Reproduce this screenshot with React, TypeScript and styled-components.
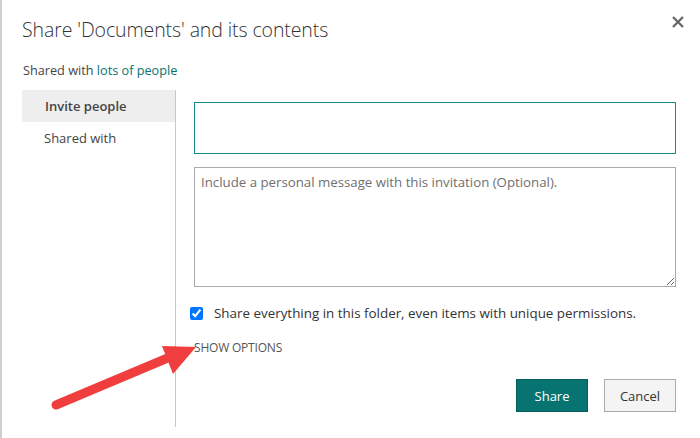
import React from 'react';
import styled, { createGlobalStyle } from 'styled-components';

const GlobalStyle = createGlobalStyle`
  html, body {
    margin: 0;
    padding: 0;
    background: #ffffff;
  }
  body {
    font-family: 'Open Sans', 'Noto Sans', 'Liberation Sans', sans-serif;
    color: #333333;
  }
`;

const teal = '#077471';

const Dialog = styled.div`
  position: relative;
  box-sizing: border-box;
  height: 438px;
  border-left: 2px solid #cfcfcf;
  padding: 0 24px 0 20px;
  display: flex;
  flex-direction: column;
`;

const Title = styled.h1`
  margin: 15px 0 0 0;
  font-size: 19.5px;
  line-height: 30px;
  font-weight: 300;
  color: #333333;
  letter-spacing: -0.1px;
`;

const CloseButton = styled.button`
  position: absolute;
  top: 14px;
  right: 14px;
  width: 16px;
  height: 16px;
  padding: 0;
  border: none;
  background: none;
  display: flex;
  align-items: center;
  justify-content: center;
  cursor: pointer;
`;

const Subtitle = styled.div`
  margin-top: 16px;
  padding-left: 1px;
  font-size: 12.7px;
  line-height: 18px;
  color: #444444;
`;

const PeopleLink = styled.a`
  color: ${teal};
  text-decoration: none;
`;

const Body = styled.div`
  margin-top: 11px;
  display: flex;
  flex: 1;
  padding-bottom: 11px;
`;

const Nav = styled.nav`
  width: 153px;
  flex-shrink: 0;
  border-right: 1px solid #c8c8c8;
  display: flex;
  flex-direction: column;
`;

const NavItem = styled.div<{ $active?: boolean }>`
  height: 32px;
  display: flex;
  align-items: center;
  padding-left: ${(p) => (p.$active ? '23px' : '22px')};
  font-size: 13px;
  font-weight: ${(p) => (p.$active ? 600 : 400)};
  color: #444444;
  background: ${(p) => (p.$active ? '#eeeeee' : 'transparent')};
`;

const Content = styled.div`
  flex: 1;
  padding: 12px 0 0 18px;
  display: flex;
  flex-direction: column;
`;

const PeopleInput = styled.input`
  box-sizing: border-box;
  width: 100%;
  height: 52px;
  border: 1px solid #138c87;
  outline: none;
  margin: 0;
  font-family: inherit;
  font-size: 13px;
`;

const Message = styled.textarea`
  box-sizing: border-box;
  width: 100%;
  height: 120px;
  margin: 13px 0 0 0;
  padding: 5px 6px;
  border: 1px solid #ababab;
  font-family: inherit;
  font-size: 13.25px;
  line-height: 18px;
  color: #333333;
  resize: both;
  &::placeholder {
    color: #6f6f6f;
  }
`;

const CheckRow = styled.label`
  display: flex;
  align-items: center;
  margin-top: 17px;
  margin-left: -4px;
  font-size: 13.4px;
  color: #333333;
`;

const Check = styled.input`
  width: 13px;
  height: 13px;
  margin: 0 11px 0 0;
`;

const ShowOptions = styled.div`
  margin-top: 18px;
  font-size: 12px;
  line-height: 16px;
  color: #555555;
  letter-spacing: -0.2px;
`;

const Actions = styled.div`
  margin-top: 23px;
  display: flex;
  justify-content: flex-end;
  gap: 16px;
`;

const Button = styled.button<{ $primary?: boolean }>`
  box-sizing: border-box;
  width: 72px;
  height: 33px;
  font-family: inherit;
  font-size: 13px;
  cursor: pointer;
  border: 1px solid ${(p) => (p.$primary ? '#055e5b' : '#ababab')};
  background: ${(p) => (p.$primary ? teal : '#f4f4f4')};
  color: ${(p) => (p.$primary ? '#ffffff' : '#333333')};
`;

const Annotation = styled.svg`
  position: absolute;
  left: 0;
  top: 0;
  pointer-events: none;
`;

export default function App() {
  return (
    <>
      <GlobalStyle />
      <Dialog>
        <Title>Share 'Documents' and its contents</Title>
        <CloseButton aria-label="Close">
          <svg width="12" height="12" viewBox="0 0 12 12">
            <path d="M1 1 L11 11 M11 1 L1 11" stroke="#666666" strokeWidth="2.2" />
          </svg>
        </CloseButton>
        <Subtitle>
          Shared with <PeopleLink href="#">lots of people</PeopleLink>
        </Subtitle>
        <Body>
          <Nav>
            <NavItem $active>Invite people</NavItem>
            <NavItem>Shared with</NavItem>
          </Nav>
          <Content>
            <PeopleInput />
            <Message placeholder="Include a personal message with this invitation (Optional)." />
            <CheckRow>
              <Check type="checkbox" defaultChecked />
              Share everything in this folder, even items with unique permissions.
            </CheckRow>
            <ShowOptions>SHOW OPTIONS</ShowOptions>
            <Actions>
              <Button $primary>Share</Button>
              <Button>Cancel</Button>
            </Actions>
          </Content>
        </Body>
        <Annotation width="700" height="438" viewBox="0 0 700 438">
          <line x1="54" y1="405" x2="168" y2="357" stroke="#f03e3e" strokeWidth="9" strokeLinecap="round" />
          <polygon points="160,346 194,347 171,374" fill="#f03e3e" />
        </Annotation>
      </Dialog>
    </>
  );
}
